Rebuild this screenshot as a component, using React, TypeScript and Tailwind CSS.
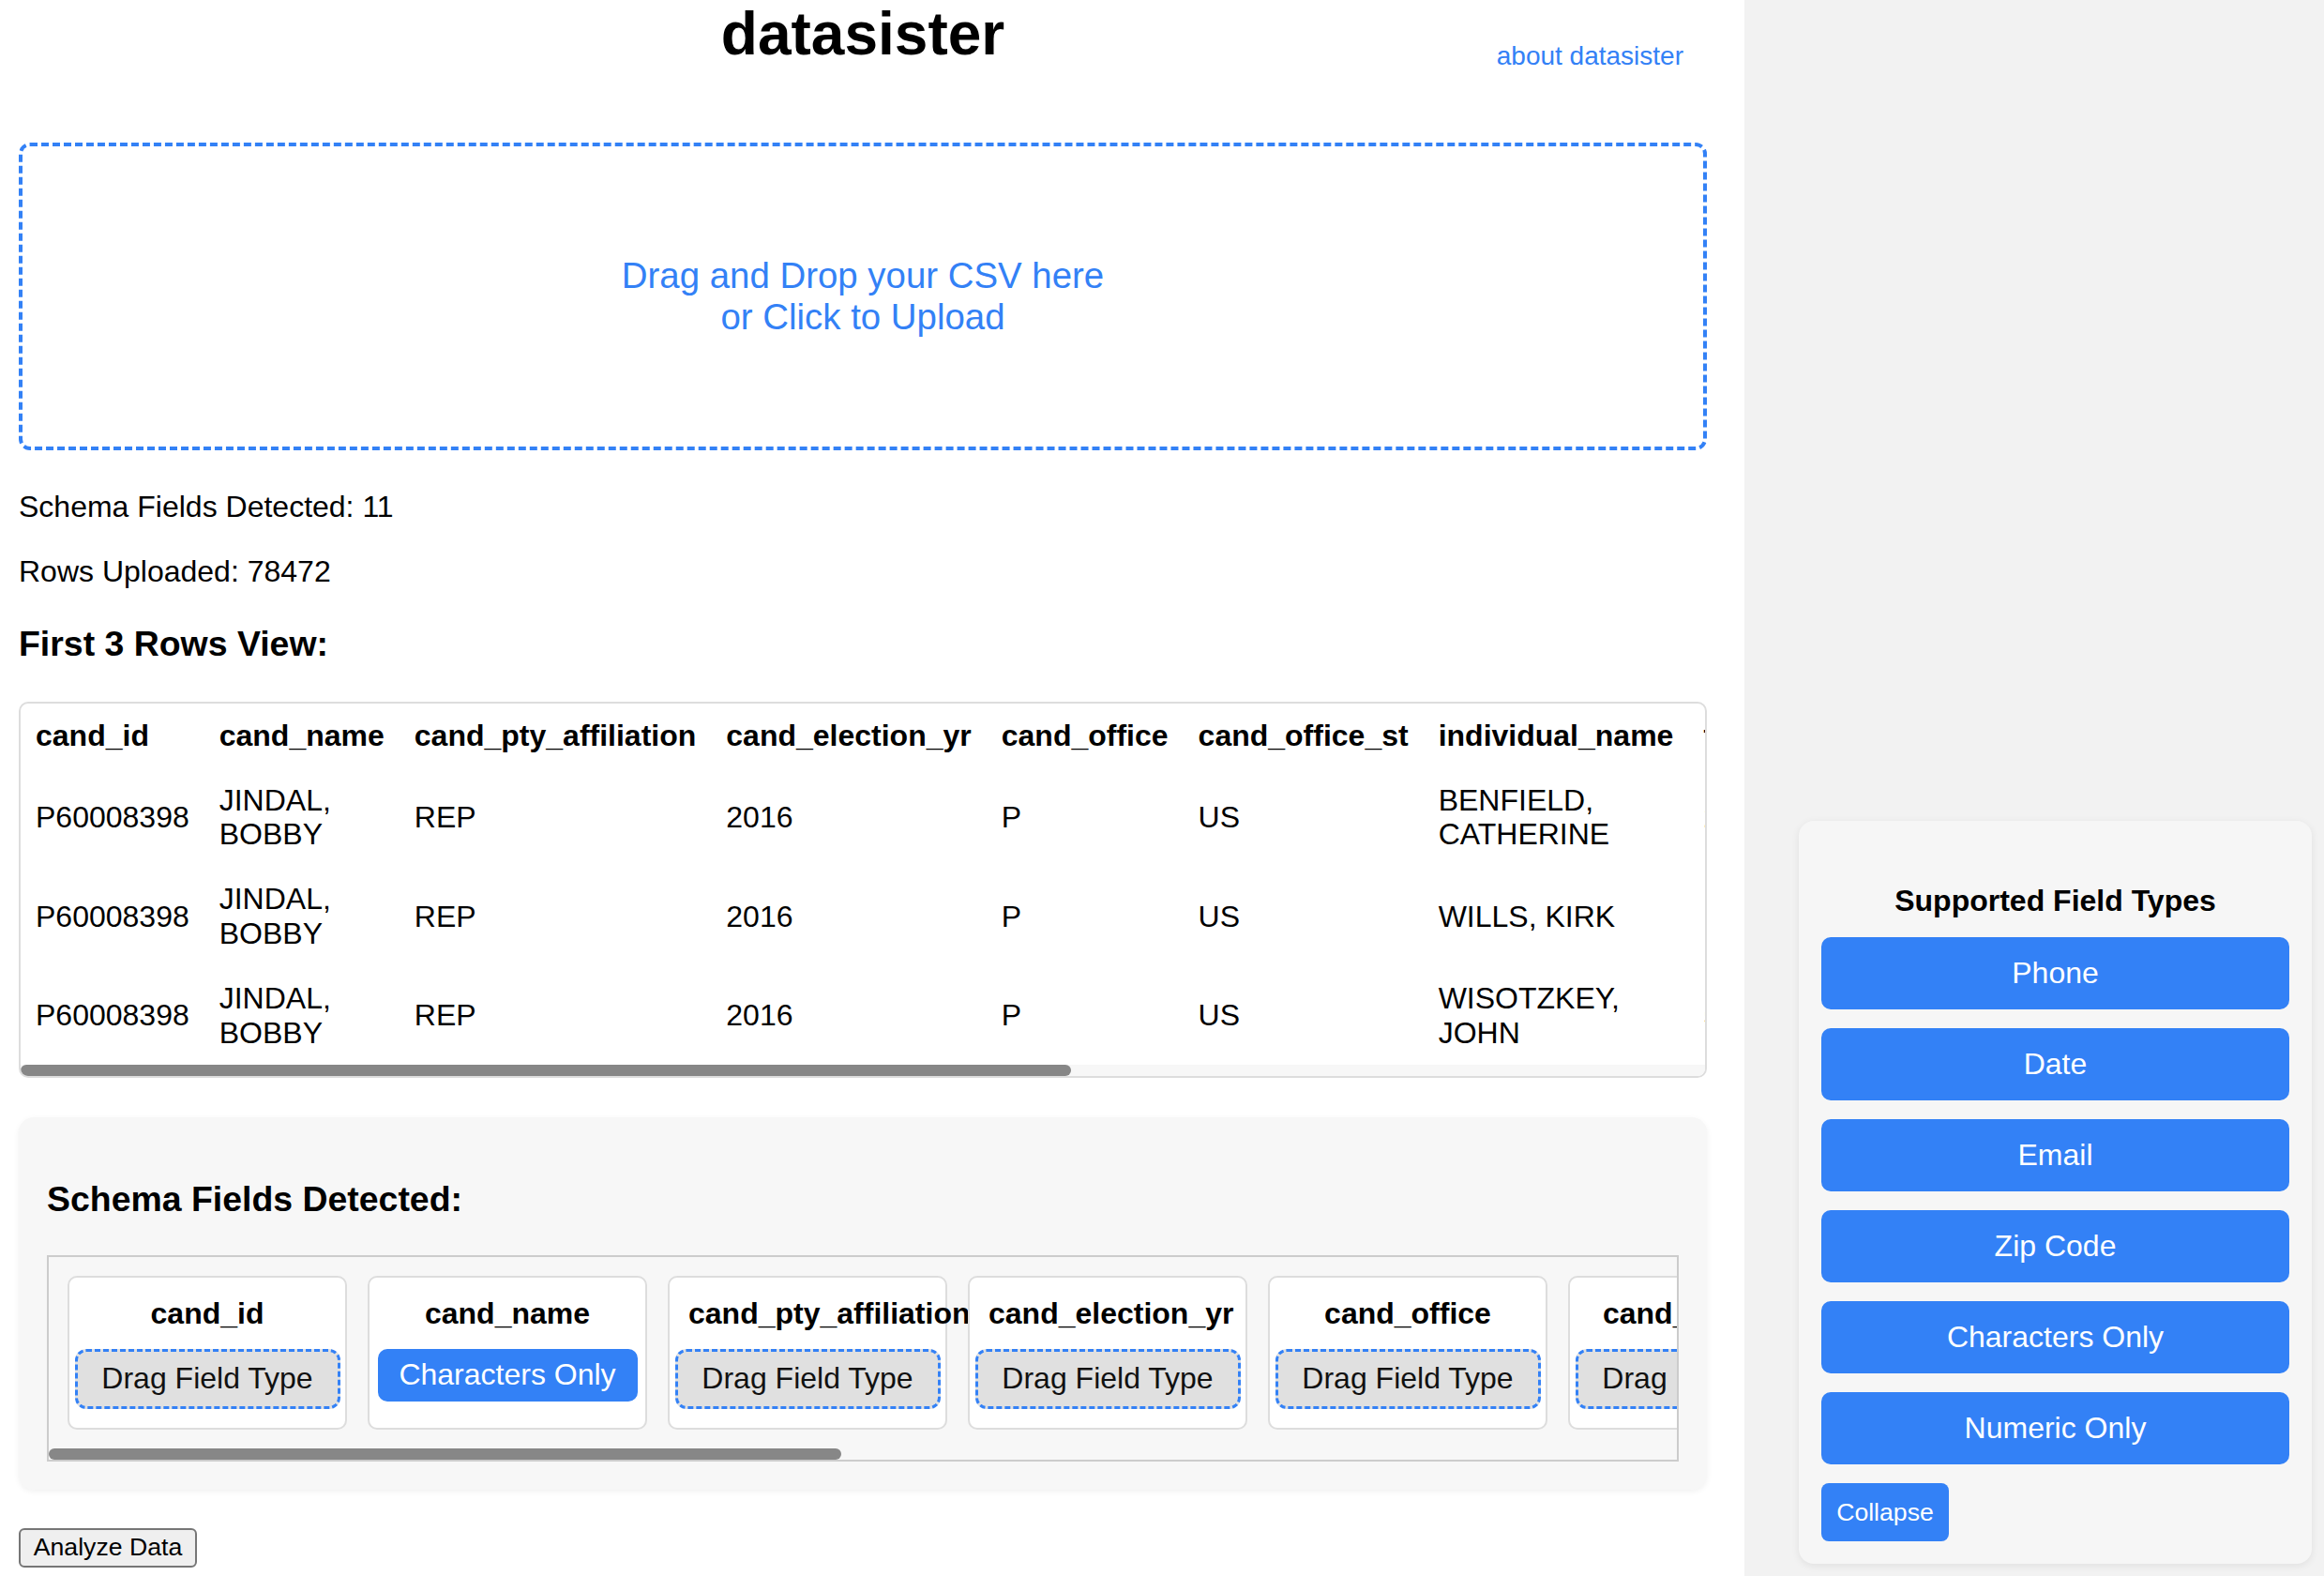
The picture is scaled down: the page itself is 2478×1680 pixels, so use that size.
import React from "react";

const columns = [
  "cand_id",
  "cand_name",
  "cand_pty_affiliation",
  "cand_election_yr",
  "cand_office",
  "cand_office_st",
  "individual_name",
  "transaction_amt",
  "transaction_dt",
  "individual_city",
  "individual_state",
];

const rows = [
  ["P60008398", "JINDAL, BOBBY", "REP", "2016", "P", "US", "BENFIELD, CATHERINE", "250", "06302015", "BATON ROUGE", "LA"],
  ["P60008398", "JINDAL, BOBBY", "REP", "2016", "P", "US", "WILLS, KIRK", "1000", "06292015", "SHREVEPORT", "LA"],
  ["P60008398", "JINDAL, BOBBY", "REP", "2016", "P", "US", "WISOTZKEY, JOHN", "500", "06302015", "METAIRIE", "LA"],
];

const fieldTypes = ["Phone", "Date", "Email", "Zip Code", "Characters Only", "Numeric Only"];

// assigned types per schema field (only cand_name has one so far)
const assigned: Record<string, string> = { cand_name: "Characters Only" };

function ScrollBar({ thumb, track }: { thumb: number; track: string }) {
  return (
    <div className={`h-[12px] ${track}`}>
      <div className="h-full rounded-full bg-[#878787]" style={{ width: thumb }} />
    </div>
  );
}

function FieldCard({ name }: { name: string }) {
  const type = assigned[name];
  return (
    <div className="w-[298px] shrink-0 bg-white border-2 border-[#dddddd] rounded-[10px] px-[20px] pt-[20px] pb-[20px] flex flex-col items-center">
      <div className="w-full text-center text-[32px] leading-[36.8px] font-bold whitespace-nowrap">{name}</div>
      {type ? (
        <div className="mt-[19px] w-[277px] h-[56px] shrink-0 rounded-[10px] bg-[#3381f6] text-white text-[32px] leading-[36.8px] flex items-center justify-center whitespace-nowrap">
          {type}
        </div>
      ) : (
        <div className="mt-[19px] w-[283px] h-[64px] shrink-0 rounded-[12px] border-[3px] border-dashed border-[#3381f6] bg-[#e0e0e0] text-[#111] text-[32px] leading-[36.8px] flex items-center justify-center whitespace-nowrap">
          Drag Field Type
        </div>
      )}
    </div>
  );
}

export default function App() {
  return (
    <div className="flex w-full h-screen overflow-hidden bg-white text-black font-['Liberation_Sans',Arial,sans-serif]">
      <main className="w-[1860px] shrink-0 pl-[20px] pr-[40px]">
        <header className="grid grid-cols-[1fr_auto_1fr]">
          <div />
          <h1 className="text-[64px] leading-[73.6px] font-bold">datasister</h1>
          <div className="flex justify-end pt-[43.5px] pr-[25px]">
            <a href="#" className="text-[28px] leading-[32.2px] text-[#3381f6]">
              about datasister
            </a>
          </div>
        </header>

        <div className="mt-[76.5px] h-[328px] border-[4px] border-dashed border-[#3381f6] rounded-[12px] flex flex-col items-center justify-center text-[#3381f6] text-[38.4px] leading-[44.2px] cursor-pointer">
          <span>Drag and Drop your CSV here</span>
          <span>or Click to Upload</span>
        </div>

        <p className="mt-[42px] text-[32px] leading-[36.8px]">Schema Fields Detected: 11</p>
        <p className="mt-[32px] text-[32px] leading-[36.8px]">Rows Uploaded: 78472</p>
        <h3 className="mt-[37px] text-[37.44px] leading-[43px] font-bold">First 3 Rows View:</h3>

        <div className="mt-[40px] border-2 border-[#dddddd] rounded-[10px] overflow-hidden">
          <div className="overflow-hidden">
            <table className="border-collapse text-[32px] leading-[36.8px]">
              <thead>
                <tr>
                  {columns.map((c) => (
                    <th key={c} className="px-[16px] py-[16px] text-left font-bold align-middle">
                      {c}
                    </th>
                  ))}
                </tr>
              </thead>
              <tbody>
                {rows.map((r, i) => (
                  <tr key={i}>
                    {r.map((v, j) => (
                      <td key={j} className="px-[16px] py-[16px] text-left align-middle">
                        {v}
                      </td>
                    ))}
                  </tr>
                ))}
              </tbody>
            </table>
          </div>
          <ScrollBar thumb={1120} track="bg-[#f7f7f7]" />
        </div>

        <section className="mt-[42px] bg-[#f7f7f7] rounded-[16px] shadow-[0_2px_6px_rgba(0,0,0,0.06)] px-[30px] pt-[28px] pb-[30px]">
          <h3 className="mt-[37.5px] text-[37.44px] leading-[43px] font-bold">Schema Fields Detected:</h3>
          <div className="mt-[38px] border-2 border-[#cccccc]">
            <div className="overflow-hidden">
              <div className="flex gap-[22px] p-[20px] w-max">
                {columns.map((c) => (
                  <FieldCard key={c} name={c} />
                ))}
              </div>
            </div>
            <ScrollBar thumb={845} track="bg-transparent" />
          </div>
        </section>

        <button className="mt-[41px] w-[190px] h-[42px] bg-[#efefef] border-2 border-[#767676] rounded-[6px] text-[26.67px] leading-[30.7px] text-black">
          Analyze Data
        </button>
      </main>

      <aside className="flex-1 h-full bg-[#f2f2f2] flex flex-col justify-end pb-[13px] pl-[58px] pr-[13px]">
        <div className="bg-[#f6f6f6] rounded-[16px] shadow-[0_2px_8px_rgba(0,0,0,0.08)] p-[24px]">
          <h4 className="mt-[42.5px] mb-[20.5px] text-center text-[32px] leading-[36.8px] font-bold">Supported Field Types</h4>
          <div className="flex flex-col gap-[20px]">
            {fieldTypes.map((t) => (
              <button
                key={t}
                className="h-[77px] w-full rounded-[10px] bg-[#3381f6] text-white text-[32px] leading-[36.8px]"
              >
                {t}
              </button>
            ))}
          </div>
          <button className="mt-[20px] w-[136px] h-[62px] rounded-[8px] bg-[#3381f6] text-white text-[26.67px] leading-[30.7px]">
            Collapse
          </button>
        </div>
      </aside>
    </div>
  );
}
